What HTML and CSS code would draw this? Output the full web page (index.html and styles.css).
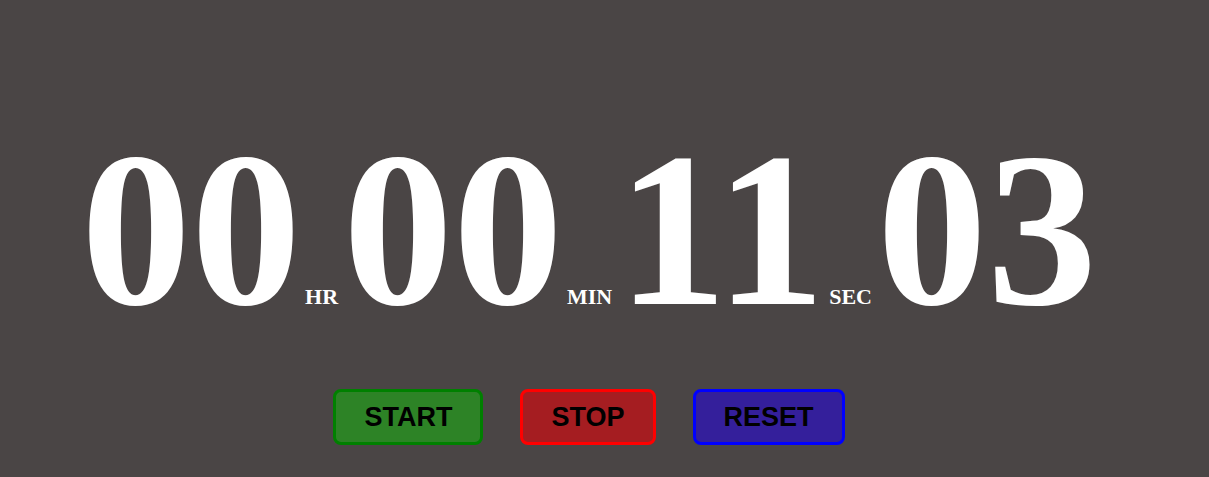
FILE: index.html
```html
<!DOCTYPE html>
<html lang="en">
<head>
<meta charset="utf-8">
<title>Stopwatch</title>
<link rel="stylesheet" href="styles.css">
</head>
<body>
<main class="app">
  <div class="timer">
    <span class="digits">00</span><span class="unit">HR</span>
    <span class="digits">00</span><span class="unit">MIN</span>
    <span class="digits">11</span><span class="unit">SEC</span>
    <span class="digits">03</span>
  </div>
  <div class="controls">
    <button class="btn btn-start">START</button>
    <button class="btn btn-stop">STOP</button>
    <button class="btn btn-reset">RESET</button>
  </div>
</main>
</body>
</html>
```

FILE: styles.css
```css
html, body {
  margin: 0;
  padding: 0;
}

body {
  background: #4a4545;
  width: 1209px;
  height: 477px;
  overflow: hidden;
}

.app {
  display: flex;
  flex-direction: column;
  align-items: center;
  padding-right: 31px;
}

.timer {
  display: flex;
  align-items: baseline;
  padding-top: 120px;
  color: #ffffff;
  font-family: "Liberation Serif", "Times New Roman", serif;
  font-weight: bold;
}

.digits {
  font-size: 220px;
  line-height: 220px;
}

.unit {
  font-size: 22px;
  line-height: 24px;
  margin: 0 5px 0 4px;
}

.controls {
  display: flex;
  gap: 37px;
  margin-top: 49px;
}

.btn {
  font-family: "Liberation Sans", Arial, sans-serif;
  font-weight: bold;
  font-size: 27px;
  line-height: 30px;
  color: #000000;
  padding: 10px 28px;
  border: 3px solid;
  border-radius: 8px;
}

.btn-start {
  background: #2d8326;
  border-color: #008000;
}

.btn-stop {
  background: #a51d21;
  border-color: #ff0000;
}

.btn-reset {
  background: #341f9b;
  border-color: #0000ff;
}
```
